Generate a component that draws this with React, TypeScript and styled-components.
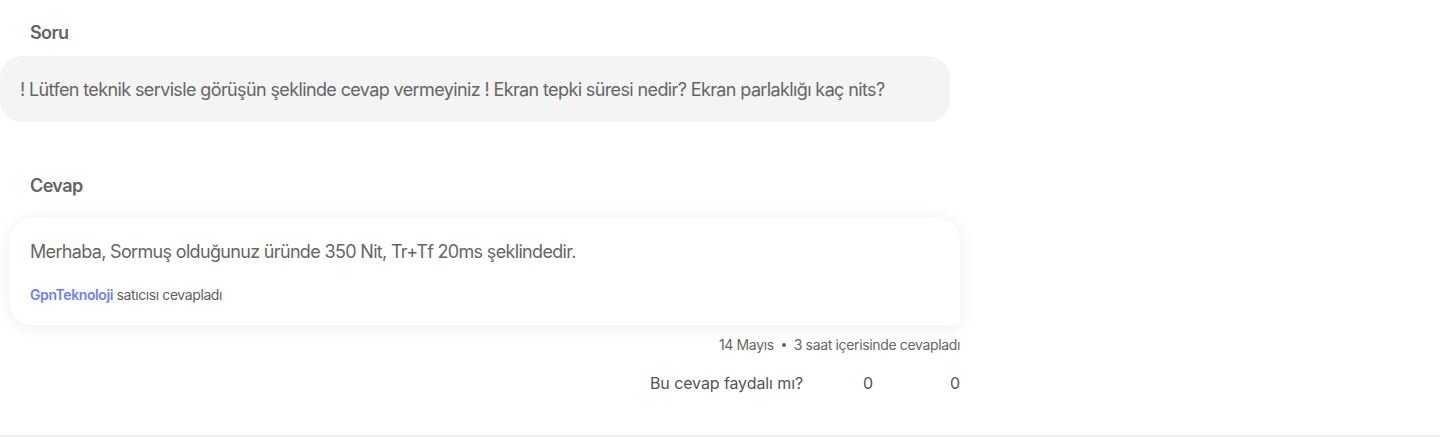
import React from "react";
import styled, { createGlobalStyle } from "styled-components";

const Global = createGlobalStyle`
  html, body { margin: 0; padding: 0; background: #fff; }
  body { font-family: Inter, "Noto Sans", Arial, sans-serif; color: #666; }
`;

const Page = styled.div`
  width: 1440px;
  height: 437px;
  box-sizing: border-box;
  border-bottom: 2px solid #efefef;
`;

const Section = styled.div`
  width: 960px;
  display: flex;
  flex-direction: column;
`;

const Label = styled.div<{ $top: number }>`
  padding: ${(p) => p.$top}px 0 0 30px;
  height: 20px;
  line-height: 20px;
  font-size: 18px;
  font-weight: 600;
  letter-spacing: -0.6px;
  color: #646464;
`;

const QuestionBox = styled.div`
  margin-top: 13px;
  width: 950px;
  height: 66px;
  box-sizing: border-box;
  background: #f4f4f4;
  border-radius: 22px;
  display: flex;
  align-items: center;
  padding: 0 0 0 20px;
  font-size: 18px;
  color: #666;
  letter-spacing: -0.62px;
`;

const AnswerCard = styled.div`
  margin: 22px 0 0 10px;
  width: 950px;
  height: 107px;
  box-sizing: border-box;
  background: #fff;
  border-radius: 22px 22px 0 22px;
  box-shadow: 0 2px 18px rgba(0, 0, 0, 0.07);
  padding: 23px 20px 0 20px;
  display: flex;
  flex-direction: column;
`;

const AnswerText = styled.div`
  font-size: 18px;
  line-height: 22px;
  color: #666;
  letter-spacing: -0.67px;
`;

const Seller = styled.div`
  margin-top: 23px;
  font-size: 14px;
  line-height: 17px;
  color: #5f5f5f;
  letter-spacing: -0.4px;
`;

const SellerName = styled.span`
  color: #6b82f0;
  font-weight: 600;
`;

const Meta = styled.div`
  margin-top: 11px;
  align-self: flex-end;
  display: flex;
  align-items: center;
  gap: 8px;
  font-size: 14px;
  line-height: 17px;
  color: #666;
  letter-spacing: -0.35px;
`;

const Dot = styled.span`
  width: 4px;
  height: 4px;
  border-radius: 50%;
  background: #666;
`;

const Helpful = styled.div`
  margin-top: 20px;
  align-self: flex-end;
  display: flex;
  align-items: center;
  font-size: 16px;
  line-height: 20px;
  color: #555;
  letter-spacing: -0.1px;
`;

const Count = styled.span<{ $gap: number }>`
  margin-left: ${(p) => p.$gap}px;
`;

export default function App() {
  return (
    <>
      <Global />
      <Page>
        <Section>
          <Label $top={23}>Soru</Label>
          <QuestionBox>
            ! Lütfen teknik servisle görüşün şeklinde cevap vermeyiniz ! Ekran tepki süresi nedir? Ekran parlaklığı kaç nits?
          </QuestionBox>
          <Label $top={54}>Cevap</Label>
          <AnswerCard>
            <AnswerText>Merhaba, Sormuş olduğunuz üründe 350 Nit, Tr+Tf 20ms şeklindedir.</AnswerText>
            <Seller>
              <SellerName>GpnTeknoloji</SellerName> satıcısı cevapladı
            </Seller>
          </AnswerCard>
          <Meta>
            <span>14 Mayıs</span>
            <Dot />
            <span>3 saat içerisinde cevapladı</span>
          </Meta>
          <Helpful>
            <span>Bu cevap faydalı mı?</span>
            <Count $gap={60}>0</Count>
            <Count $gap={77}>0</Count>
          </Helpful>
        </Section>
      </Page>
    </>
  );
}
